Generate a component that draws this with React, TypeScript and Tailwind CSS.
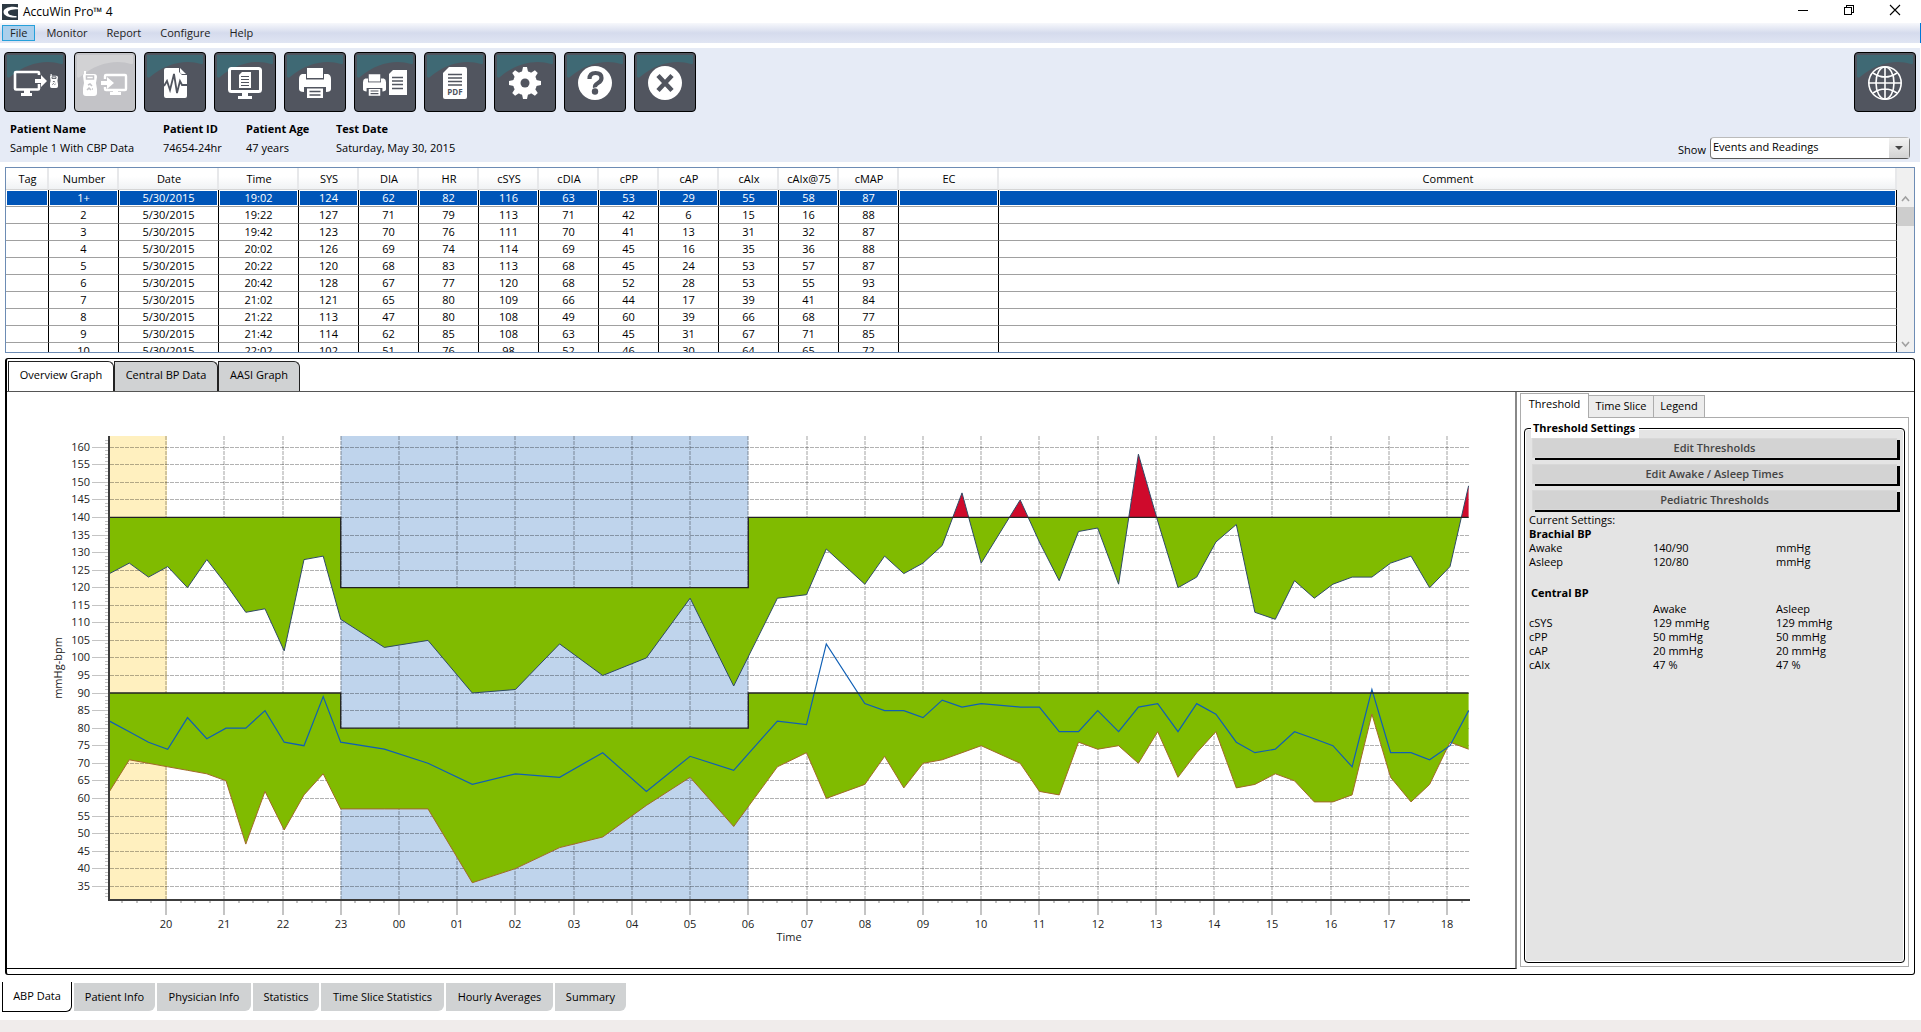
import React, { useState } from 'react';
import clsx from 'clsx';

// hour, systolic, diastolic, heart rate (hours run past 24 into the next day)
const SERIES: [number, number, number, number][] = [
  [19.03, 124, 62, 82], [19.37, 127, 71, 79], [19.7, 123, 70, 76], [20.03, 126, 69, 74],
  [20.37, 120, 68, 83], [20.7, 128, 67, 77], [21.03, 121, 65, 80], [21.37, 113, 47, 80],
  [21.7, 114, 62, 85], [22.03, 102, 51, 76], [22.37, 128, 61, 75], [22.7, 129, 67, 89],
  [23, 111, 57, 76], [23.75, 103, 57, 74], [24.5, 105, 57, 70], [25.26, 90, 36, 64],
  [26, 91, 40, 67], [26.76, 104, 46, 66], [27.5, 95, 49, 73], [28.25, 100, 58, 62],
  [29, 117, 66, 72], [29.75, 92, 52, 68], [30.5, 117, 69, 82], [31, 118, 73, 81],
  [31.34, 131, 60, 104], [32, 121, 64, 87], [32.34, 129, 72, 85], [32.67, 124, 63, 85],
  [33, 127, 70, 83], [33.33, 132, 71, 88], [33.67, 147, 73, 86], [34, 127, 75, 87],
  [34.67, 145, 70, 86], [35, 133, 62, 86], [35.34, 122, 61, 79], [35.67, 136, 76, 79],
  [36, 137, 74, 85], [36.36, 121, 75, 79], [36.7, 158, 70, 86], [37.03, 139, 79, 87],
  [37.38, 120, 66, 79], [37.7, 123, 73, 87], [38.03, 133, 79, 84], [38.38, 138, 63, 76],
  [38.7, 113, 64, 73], [39.05, 111, 67, 74], [39.38, 122, 65, 79], [39.72, 117, 59, 77],
  [40.04, 121, 59, 75], [40.37, 123, 61, 69], [40.71, 123, 84, 91], [41.03, 127, 66, 73],
  [41.38, 129, 59, 73], [41.7, 120, 64, 71], [42.05, 126, 76, 75], [42.37, 149, 74, 85],
];

const COLUMNS = ['Tag', 'Number', 'Date', 'Time', 'SYS', 'DIA', 'HR', 'cSYS', 'cDIA', 'cPP', 'cAP', 'cAIx', 'cAIx@75', 'cMAP', 'EC', 'Comment'];

const READINGS = [
  ['1+', '19:02', 124, 62, 82, 116, 63, 53, 29, 55, 58, 87],
  ['2', '19:22', 127, 71, 79, 113, 71, 42, 6, 15, 16, 88],
  ['3', '19:42', 123, 70, 76, 111, 70, 41, 13, 31, 32, 87],
  ['4', '20:02', 126, 69, 74, 114, 69, 45, 16, 35, 36, 88],
  ['5', '20:22', 120, 68, 83, 113, 68, 45, 24, 53, 57, 87],
  ['6', '20:42', 128, 67, 77, 120, 68, 52, 28, 53, 55, 93],
  ['7', '21:02', 121, 65, 80, 109, 66, 44, 17, 39, 41, 84],
  ['8', '21:22', 113, 47, 80, 108, 49, 60, 39, 66, 68, 77],
  ['9', '21:42', 114, 62, 85, 108, 63, 45, 31, 67, 71, 85],
  ['10', '22:02', 102, 51, 76, 98, 52, 46, 30, 64, 65, 72],
];

const DARK = '#51555f';

function Device({ x, y, w, h }: { x: number; y: number; w: number; h: number }) {
  return (
    <svg x={x} y={y} width={w} height={h} viewBox="0 0 14 25" preserveAspectRatio="none">
      <path d="M1 0h2v3h8q3 0 3 3l-1 6 1 6v4q0 3-3 3H3q-3 0-3-3v-5l1-5-1-7q0-2 1-2z" fill="#fff" />
      <path d="M3.5 5h7v3h-7z" fill="none" stroke="currentColor" strokeWidth="1.500" />
      <path d="M5 14l2-1 2 2M4 19l2-2 2 2M9 18h1" fill="none" stroke="currentColor" strokeWidth="1.500" />
    </svg>
  );
}

function Printer({ x, y, w, h }: { x: number; y: number; w: number; h: number }) {
  return (
    <svg x={x} y={y} width={w} height={h} viewBox="0 0 32 30">
      <path d="M8 0h16v10H8z" fill="#fff" />
      <path d="M3 6h4v6h18V6h4q3 1 3 5v10q0 3-5 3v-5H5v5q-5 0-5-3V11q0-4 3-5z" fill="#fff" />
      <path d="M7 11.500h18v6H7z" fill="#fff" />
      <path d="M8 20.500h16V30H8z" fill="#fff" />
      <path d="M10.500 23.500h11M10.500 27h11" stroke={DARK} strokeWidth="1.400" />
    </svg>
  );
}

const ICONS: Record<string, React.ReactNode> = {
  'Send to monitor': (
    <>
      <path d="M35 32v4.500q0 1-1 1H12q-1 0-1-1V21q0-1 1-1h22q1 0 1 1v2" fill="none" stroke="#fff" strokeWidth="2.600" />
      <path d="M20 38h6v3h2v3H17v-3h3z" fill="#fff" />
      <path d="M31 27h6v-4l6 6-6 6v-4h-6z" fill="#fff" />
      <Device x={46} y={22} w={8} h={14} />
    </>
  ),
  'Receive from monitor': (
    <>
      <Device x={9} y={19} w={14} h={25} />
      <path d="M31 27v-3q0-1 1-1h19q1 0 1 1v13q0 1-1 1H32q-1 0-1-1v-2" fill="none" stroke="#fff" strokeWidth="2.400" />
      <path d="M39 38h5v2h3v3H36v-3h3z" fill="#fff" />
      <path d="M27 29h6v-4l7 6-7 6v-4h-6z" fill="#fff" />
    </>
  ),
  'Open test': (
    <>
      <path d="M22 16h13v4l3 3h5v21q0 2-2 2H22q-2 0-2-2V18q0-2 2-2z" fill="#fff" />
      <path d="M36 16l6 6h-4q-2 0-2-2z" fill="#fff" />
      <path d="M20 34l3-5 3 9 4-16 3 19 3-12 2 4h5" fill="none" stroke={DARK} strokeWidth="1.800" />
    </>
  ),
  'View report': (
    <>
      <rect x="15.500" y="16.500" width="31" height="23" rx="2" fill="none" stroke="#fff" strokeWidth="3" />
      <path d="M28 41h6v3h4v3H24v-3h4z" fill="#fff" />
      <path d="M28 20h9v16H25V23z" fill="#fff" />
      <path d="M27 24.500h8M27 27.500h8M27 30.500h8M27 33.500h8" stroke={DARK} strokeWidth="1.200" />
    </>
  ),
  Print: <Printer x={15} y={16} w={32} h={30} />,
  'Print report': (
    <>
      <Printer x={9} y={22} w={23} h={22} />
      <path d="M39 18h14v25H35V22z" fill="#fff" />
      <path d="M38 25.500h11M38 29h11M38 32.500h11M38 36.500h11" stroke={DARK} strokeWidth="1.400" />
    </>
  ),
  'Save as PDF': (
    <>
      <path d="M25 15h16q2 0 2 2v28q0 2-2 2H21q-2 0-2-2V21z" fill="#fff" />
      <path d="M24 22.500h14M24 26h14M24 29.500h14M24 33h14" stroke={DARK} strokeWidth="1.400" />
      <text x="31" y="43" textAnchor="middle" fontSize="8" fontWeight="700" fill={DARK}>PDF</text>
    </>
  ),
  Settings: (
    <>
      <circle cx="31" cy="31" r="12" fill="#fff" />
      {[0, 45, 90, 135, 180, 225, 270, 315].map(a => (
        <path key={a} d="M27.500 22l1.500-7h4l1.500 7z" fill="#fff" transform={`rotate(${a} 31 31)`} />
      ))}
      <circle cx="31" cy="31" r="4.500" fill={DARK} />
    </>
  ),
  Help: (
    <>
      <circle cx="31" cy="31" r="17" fill="#fff" />
      <path d="M25.500 27q0-6 6-6t6 5q0 3-3.500 5t-3 4.500" fill="none" stroke={DARK} strokeWidth="4.200" />
      <circle cx="31" cy="39.500" r="3.200" fill={DARK} />
    </>
  ),
  Exit: (
    <>
      <circle cx="31" cy="31" r="17" fill="#fff" />
      <path d="M24 23.500l14 15M38 23.500l-14 15" stroke={DARK} strokeWidth="4.500" />
    </>
  ),
  Language: (
    <g fill="none" stroke="#fff" strokeWidth="1.600">
      <circle cx="31" cy="31" r="16.200" />
      <ellipse cx="31" cy="31" rx="9" ry="16" />
      <path d="M31 15v32M15 31h32M19 21q12 8 24 0M19 41q12-8 24 0" />
    </g>
  ),
};

function ToolButton({ name, disabled }: { name: string; disabled?: boolean }) {
  return (
    <button type="button" aria-label={name} disabled={disabled} className={clsx('h-[60px] w-[62px] shrink-0 overflow-hidden rounded border border-black', disabled ? 'bg-[#c3c3c7] text-[#c3c3c7]' : 'bg-[#51555f] text-[#51555f]')}>
      <svg viewBox="1 1 60 58" className="block h-full w-full">
        <path d="M3 3H59V11C59 12 58 12 57 12C42 7 22 11 6 25C5 26 3 26 3 24Z" fill={disabled ? '#d2d2d4' : '#3f6974'} />
        {ICONS[name]}
      </svg>
    </button>
  );
}

const px = (t: number) => Math.round((159 + (t - 20) * 58.23) * 10) / 10;
const py = (v: number) => Math.round((494.2 - (v - 35) * 3.512) * 10) / 10;

const line = (k: 1 | 2 | 3) => SERIES.map(p => `${px(p[0])},${py(p[k])}`).join(' ');

function limit(awake: number, asleep: number) {
  return [[19.03, awake], [23, awake], [23, asleep], [30, asleep], [30, awake], [42.37, awake]]
    .map(([t, v]) => `${px(t)},${py(v)}`);
}

function area(awake: number, asleep: number, k: 1 | 2) {
  return `${line(k)} ${limit(awake, asleep).reverse().join(' ')}`;
}

function Chart() {
  const levels = Array.from({ length: 26 }, (_, i) => 35 + i * 5);
  const hours = Array.from({ length: 23 }, (_, i) => 20 + i);
  const minorY = Array.from({ length: 131 }, (_, i) => 32 + i);
  const minorX = Array.from({ length: 93 }, (_, i) => 19.25 + i * 0.25);
  const top = 44;
  const bottom = 507;
  const right = 1463;

  return (
    <svg viewBox="0 0 1508 576" className="block h-auto w-full" fontSize="11" fill="#222">
      <defs>
        <clipPath id="over"><rect x="0" y="0" width="1508" height={py(140)} /></clipPath>
        <clipPath id="under"><rect x="0" y={py(140)} width="1508" height="400" /></clipPath>
      </defs>
      <rect x="103" y={top} width="57" height={bottom - top} fill="#fff0bf" />
      <rect x={px(23)} y={top} width={px(30) - px(23)} height={bottom - top} fill="#bfd4ec" />

      <g stroke="#000">
        {levels.map(v => (
          <line key={v} x1="103" x2={right} y1={Math.floor(py(v)) + 0.5} y2={Math.floor(py(v)) + 0.5} strokeOpacity="0.3" strokeDasharray="4 1" />
        ))}
        {hours.map(t => (
          <line key={t} x1={Math.round(px(t))} x2={Math.round(px(t))} y1={top} y2={bottom} strokeWidth="2" strokeOpacity="0.18" strokeDasharray="4 1" />
        ))}
      </g>

      <g fill="#80bb00">
        <polygon points={area(140, 120, 1)} clipPath="url(#under)" />
        <polygon points={area(140, 120, 1)} clipPath="url(#over)" fill="#cf0a2c" />
        <polygon points={area(90, 80, 2)} />
      </g>
      <g fill="none">
        <polyline points={line(1)} stroke="#2f4a66" />
        <polyline points={line(2)} stroke="#a06a28" />
        <polyline points={line(3)} stroke="#0f5fb5" strokeWidth="1.200" />
        <polyline points={limit(140, 120).join(' ')} stroke="#222" strokeWidth="1.300" />
        <polyline points={limit(90, 80).join(' ')} stroke="#222" strokeWidth="1.300" />
      </g>

      <g stroke="#c4c4c4" shapeRendering="crispEdges">
        {levels.map(v => <line key={v} x1="85" x2="101" y1={Math.floor(py(v)) + 0.5} y2={Math.floor(py(v)) + 0.5} />)}
        {minorY.map(v => <line key={v} x1="98" x2="101" y1={py(v)} y2={py(v)} />)}
        {minorX.map(t => <line key={t} x1={Math.round(px(t))} x2={Math.round(px(t))} y1="508" y2="511" strokeWidth="2" />)}
        {hours.map(t => <line key={t} x1={Math.round(px(t))} x2={Math.round(px(t))} y1="508" y2="523" strokeWidth="2" />)}
      </g>
      <path d={`M102 ${top}V508H${right}`} fill="none" stroke="#3c3c3c" strokeWidth="2" />

      {levels.map(v => <text key={v} x="83" y={Math.floor(py(v)) + 4} textAnchor="end">{v}</text>)}
      {hours.map(t => <text key={t} x={Math.round(px(t))} y="536" textAnchor="middle">{String(t % 24).padStart(2, '0')}</text>)}
      <text x="782" y="549" textAnchor="middle">Time</text>
      <text transform="translate(55 276) rotate(-90)" textAnchor="middle">mmHg-bpm</text>
    </svg>
  );
}

function ReadingsTable() {
  return (
    <div className="mt-[5px] mr-[6px] ml-[5px] flex h-[186px] overflow-hidden border border-[#6d8cb4]">
      <div className="min-w-0 flex-1 overflow-hidden">
        <table className="w-full table-fixed border-separate border-spacing-0 text-center">
          <colgroup>
            <col className="w-[43px]" />
            <col className="w-[70px]" />
            <col className="w-[100px]" />
            <col className="w-[80px]" />
            {COLUMNS.slice(4, 14).map(c => <col key={c} className="w-[60px]" />)}
            <col className="w-[100px]" />
            <col />
          </colgroup>
          <thead>
            <tr>
              {COLUMNS.map(c => (
                <th key={c} className="h-[22px] border-r-2 border-b border-r-[#e7e8ea] border-b-[#d5d5d5] bg-linear-to-b from-white from-40% to-[#f0f2f4] py-0 pr-0 pl-0.5 font-normal leading-[20px]">{c}</th>
              ))}
            </tr>
          </thead>
          <tbody>
            {READINGS.map((r, i) => {
              const cells = ['', r[0], '5/30/2015', ...r.slice(1), '', ''];
              return (
                <tr key={r[0]}>
                  {cells.map((c, j) => (
                    <td key={j} className={clsx('h-[17px] border-r border-b border-r-black border-b-[#a0a0a0] bg-clip-content p-px leading-[14px]', i === 0 && 'bg-[#0055b8] text-white')}>
                      {c === '' ? '\u00a0' : c}
                    </td>
                  ))}
                </tr>
              );
            })}
          </tbody>
        </table>
      </div>
      <div className="flex w-[17px] flex-col bg-[#f0f0f0]">
        <svg viewBox="0 0 17 14" className="mt-6 h-[14px]" fill="none" stroke="#a0a0a0" strokeWidth="1.600"><path d="M5 9l3.500-4L12 9" /></svg>
        <div className="mt-px h-[19px] bg-[#cdcdcd]" />
        <div className="flex-1" />
        <svg viewBox="0 0 17 14" className="h-[14px]" fill="none" stroke="#a0a0a0" strokeWidth="1.600"><path d="M5 4l3.500 4L12 4" /></svg>
      </div>
    </div>
  );
}

function ThresholdPanel() {
  return (
    <aside className="ml-[3px] mt-px mr-[5px] mb-[7px] flex w-[389px] shrink-0 flex-col">
      <div role="tablist" className="flex h-6 items-end">
        <button type="button" role="tab" aria-selected="true" className="z-10 -mb-px h-[25px] w-[69px] border border-b-0 border-[#acacac] bg-white pb-1 text-center">Threshold</button>
        <button type="button" role="tab" className="h-[22px] w-[65px] border border-b-0 border-l-0 border-[#acacac] bg-[#ececec]">Time Slice</button>
        <button type="button" role="tab" className="h-[22px] w-[51px] border border-b-0 border-l-0 border-[#acacac] bg-[#ececec]">Legend</button>
      </div>
      <div className="flex flex-1 flex-col border border-[#acacac] px-[3px] pb-[3px]">
        <fieldset className="flex-1 rounded border border-black bg-[#e4e4e4] px-1 shadow-[inset_0_0_0_1px_#fff]">
          <legend className="ml-0.5 bg-white pr-1 pl-0.5 font-bold leading-[20px]">Threshold Settings</legend>
          <div className="flex flex-col gap-[4px] pl-[3px]">
            {['Edit Thresholds', 'Edit Awake / Asleep Times', 'Pediatric Thresholds'].map(label => (
              <button key={label} type="button" className="mr-[3px] mb-[2px] h-5 border border-[#d8d8d8] bg-[#d3d3d3] font-semibold leading-[18px] text-[#444] shadow-[3px_2px_0_#000]">{label}</button>
            ))}
          </div>
          <table className="mt-px w-full table-fixed text-left leading-[14px]">
            <colgroup><col className="w-[124px]" /><col className="w-[123px]" /><col /></colgroup>
            <tbody>
              <tr><td colSpan={3} className="p-0">Current Settings:</td></tr>
              <tr><th colSpan={3} className="p-0 font-bold">Brachial BP</th></tr>
              <tr><td>Awake</td><td>140/90</td><td>mmHg</td></tr>
              <tr><td>Asleep</td><td>120/80</td><td>mmHg</td></tr>
            </tbody>
          </table>
          <table className="mt-[17px] w-full table-fixed text-left leading-[14px]">
            <colgroup><col className="w-[124px]" /><col className="w-[123px]" /><col /></colgroup>
            <tbody>
              <tr><th colSpan={3} className="pb-[2px] pl-0.5 font-bold">Central BP</th></tr>
              <tr><td /><td>Awake</td><td>Asleep</td></tr>
              <tr><td>cSYS</td><td>129 mmHg</td><td>129 mmHg</td></tr>
              <tr><td>cPP</td><td>50 mmHg</td><td>50 mmHg</td></tr>
              <tr><td>cAP</td><td>20 mmHg</td><td>20 mmHg</td></tr>
              <tr><td>cAIx</td><td>47 %</td><td>47 %</td></tr>
            </tbody>
          </table>
        </fieldset>
      </div>
    </aside>
  );
}

const GRAPH_TABS = [
  { name: 'Overview Graph', width: 'w-[106px]' },
  { name: 'Central BP Data', width: 'w-[104px]' },
  { name: 'AASI Graph', width: 'w-[82px]' },
];

const PAGE_TABS = [
  { name: 'ABP Data', width: 'w-[70px]' },
  { name: 'Patient Info', width: 'w-[81px]' },
  { name: 'Physician Info', width: 'w-[94px]' },
  { name: 'Statistics', width: 'w-[66px]' },
  { name: 'Time Slice Statistics', width: 'w-[123px]' },
  { name: 'Hourly Averages', width: 'w-[107px]' },
  { name: 'Summary', width: 'w-[71px]' },
];

const PATIENT = [
  ['Patient Name', 'Sample 1 With CBP Data'],
  ['Patient ID', '74654-24hr'],
  ['Patient Age', '47 years'],
  ['Test Date', 'Saturday, May 30, 2015'],
];

export default function App() {
  const [graphTab, setGraphTab] = useState('Overview Graph');
  const [pageTab, setPageTab] = useState('ABP Data');

  return (
    <div className="flex min-h-screen flex-col bg-white font-['Open_Sans','Noto_Sans',sans-serif] text-[11px] text-black">
      <header className="flex h-[23px] items-center pl-[2px] text-xs">
        <svg viewBox="0 0 16 16" className="h-4 w-4">
          <path d="M0 0h16v16H0z" fill="#2d3943" />
          <path d="M16 3.500C9 1.500 1.500 4 1.500 8S8 14 14.500 13.500V12C9 12 6 10.500 6 8.300S10 5.200 16 5.200Z" fill="#fff" />
        </svg>
        <h1 className="ml-[5px] flex-1">AccuWin Pro™ 4</h1>
        <div className="flex gap-[34px] pr-5 pb-[3px]">
          <button type="button" aria-label="Minimize"><svg viewBox="0 0 12 12" className="h-3 w-3" stroke="#000" shapeRendering="crispEdges"><path d="M1 6.500h10" /></svg></button>
          <button type="button" aria-label="Restore"><svg viewBox="0 0 12 12" className="h-3 w-3" fill="none" stroke="#000" shapeRendering="crispEdges"><path d="M1.500 3.500h7v7h-7zM3.500 3V1.500h7v7H9" /></svg></button>
          <button type="button" aria-label="Close"><svg viewBox="0 0 12 12" className="h-3 w-3" stroke="#000" strokeWidth="1.100"><path d="M1 1l10 10M11 1L1 11" /></svg></button>
        </div>
      </header>

      <nav className="flex h-5 items-center gap-[3px] border-r border-[#0078d7] bg-linear-to-b from-[#f7f8fc] via-[#d5dbed] to-[#e0e5f3] pl-[2px] text-[#222]">
        {['File', 'Monitor', 'Report', 'Configure', 'Help'].map((m, i) => (
          <button key={m} type="button" className={clsx('h-4 border px-[7px] leading-[14px]', i === 0 ? 'border-[#26a0da] bg-[#abcfec]' : 'border-transparent')}>{m}</button>
        ))}
      </nav>

      <section className="mt-[5px] mr-px bg-[#e6ebf6] px-1 pt-1 pb-[3px]">
        <div className="flex gap-2">
          {Object.keys(ICONS).filter(n => n !== 'Language').map(n => (
            <ToolButton key={n} name={n} disabled={n === 'Receive from monitor'} />
          ))}
          <div className="flex-1" />
          <ToolButton name="Language" />
        </div>
        <div className="flex items-end justify-between pr-[6px] pl-[6px]">
          <dl className="grid grid-cols-[153px_83px_90px_auto] pt-[7px] pb-0.5">
            {PATIENT.map(([k, v]) => (
              <div key={k} className="whitespace-nowrap leading-[19px]">
                <dt className="font-bold">{k}</dt>
                <dd>{v}</dd>
              </div>
            ))}
          </dl>
          <div className="flex items-center gap-1">
            <label htmlFor="show" className="pt-1">Show</label>
            <div className="relative">
              <select id="show" className="block h-[22px] w-[200px] appearance-none rounded-sm border border-t-[#bbb] border-r-[#777] border-b-[#555] border-l-[#777] bg-white pl-[2px] pb-0.5">
                <option>Events and Readings</option>
              </select>
              <span className="pointer-events-none absolute top-px right-px flex h-5 w-5 items-center justify-center bg-linear-to-b from-[#f3f3f3] to-[#d2d2d2]">
                <svg viewBox="0 0 8 4" className="h-1 w-2"><path d="M0 0h8L4 4z" fill="#444" /></svg>
              </span>
            </div>
          </div>
        </div>
      </section>

      <ReadingsTable />

      <main className="mt-[5px] mr-[6px] ml-[5px] flex flex-col rounded-[3px] border border-l-2 border-black">
        <div role="tablist" className="flex pt-[2px] pl-px">
          {GRAPH_TABS.map(t => (
            <button key={t.name} type="button" role="tab" aria-selected={graphTab === t.name} onClick={() => setGraphTab(t.name)}
              className={clsx('h-[30px] rounded-tr-md border border-b-0 border-[#222] pb-0.5', t.width, graphTab === t.name ? 'bg-white' : 'bg-[#d0d2d3]')}>{t.name}</button>
          ))}
        </div>
        <div className="flex border-t border-[#555]">
          <div className="mb-[5px] min-w-0 flex-1 border-r-2 border-b border-r-[#888] border-b-black">
            <Chart />
          </div>
          <ThresholdPanel />
        </div>
      </main>

      <div role="tablist" className="mt-[7px] flex gap-[2px] pl-[2px]">
        {PAGE_TABS.map(t => (
          <button key={t.name} type="button" role="tab" aria-selected={pageTab === t.name} onClick={() => setPageTab(t.name)}
            className={clsx('rounded-br-md', t.width, pageTab === t.name ? 'h-[30px] border border-t-0 border-black bg-white' : 'mt-px h-7 bg-[#d0d2d3]')}>{t.name}</button>
        ))}
      </div>
      <footer className="mt-2 min-h-3 flex-1 bg-[#f0eceb]" />
    </div>
  );
}
